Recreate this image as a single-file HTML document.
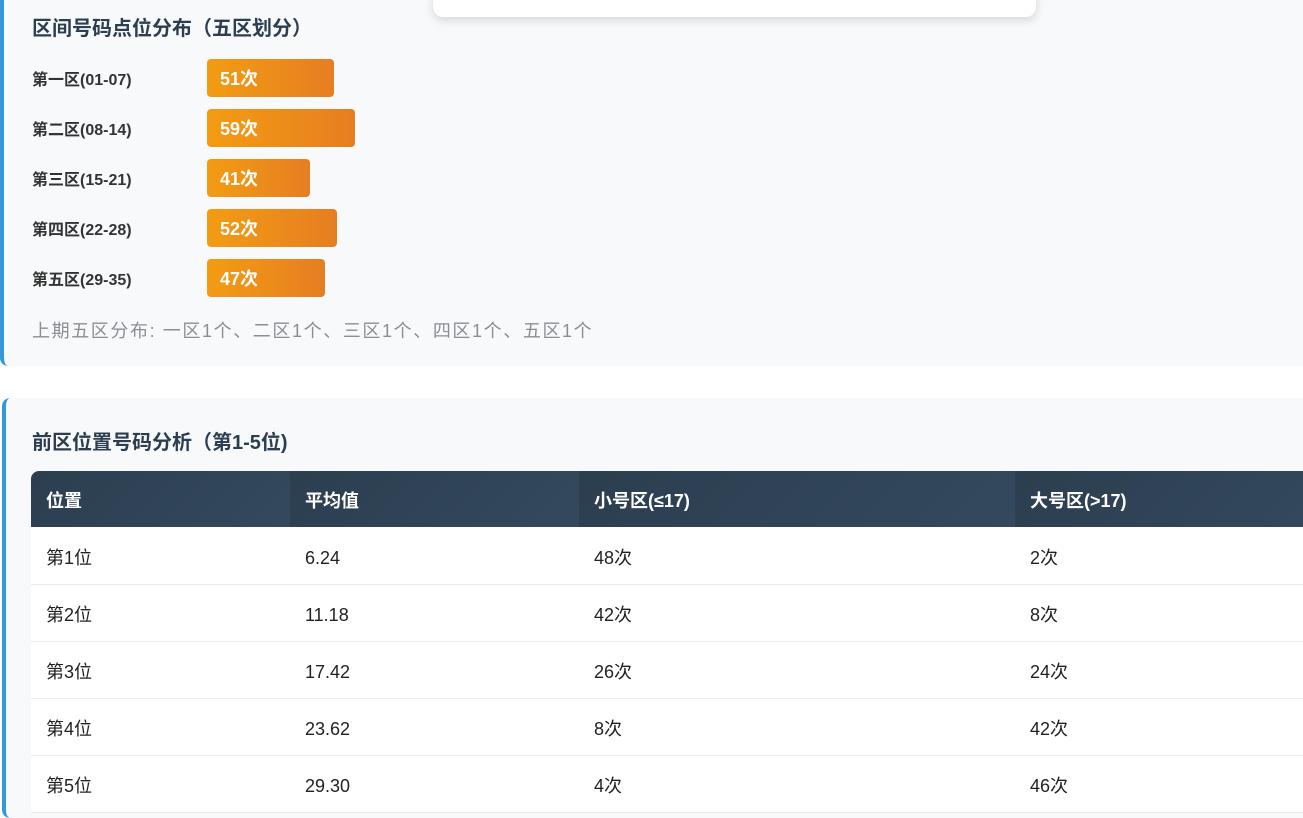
<!DOCTYPE html>
<html><head><meta charset="utf-8"><style>
*{margin:0;padding:0;box-sizing:border-box}
body{width:1303px;height:790px;overflow:hidden;background:#fff;font-family:"Liberation Sans","Noto Sans CJK SC",sans-serif;position:relative}
.sec{position:absolute;left:0;width:1320px;background:#f7f9fb;border-left:4px solid #3498db;border-radius:8px}
h3{position:absolute;left:28px;font-size:20px;font-weight:bold;color:#2c3e50}
.row{position:absolute;left:28px;height:38px;display:flex;align-items:center}
.row .l{width:175px;font-size:16px;color:#333;font-weight:bold}
.bar{height:38px;border-radius:4px;background:linear-gradient(90deg,#f39c12,#e67e22);color:#fff;font-weight:bold;font-size:18px;display:flex;align-items:center;padding-left:13px}
.note{position:absolute;left:28px;font-size:18px;color:#8a8f95;letter-spacing:1.6px}
table{position:absolute;top:73px;width:1300px;border-collapse:collapse;font-size:18px;color:#222}
th{height:56px;text-align:left;padding-left:15px;padding-top:2px;color:#fff;font-size:18px;background:linear-gradient(135deg,#2c3e50,#34495e);vertical-align:middle}
td{height:57px;padding-left:15px;padding-top:5px;border-bottom:1px solid #e8ecef;background:#fff;vertical-align:middle;line-height:24px}
.pop{position:absolute;left:433px;top:-10px;width:603px;height:27px;background:#fff;border-radius:10px;box-shadow:0 3px 10px rgba(0,0,0,.15)}
</style></head><body>
<div class="sec" style="top:-20px;height:386px">
<h3 style="top:32px">区间号码点位分布（五区划分）</h3>
<div class="row" style="top:79px"><span class="l">第一区(01-07)</span><div class="bar" style="width:127px">51次</div></div>
<div class="row" style="top:129px"><span class="l">第二区(08-14)</span><div class="bar" style="width:148px">59次</div></div>
<div class="row" style="top:179px"><span class="l">第三区(15-21)</span><div class="bar" style="width:103px">41次</div></div>
<div class="row" style="top:229px"><span class="l">第四区(22-28)</span><div class="bar" style="width:130px">52次</div></div>
<div class="row" style="top:279px"><span class="l">第五区(29-35)</span><div class="bar" style="width:118px">47次</div></div>
<div class="note" style="top:337px">上期五区分布: 一区1个、二区1个、三区1个、四区1个、五区1个</div>
</div>
<div class="pop"></div>
<div class="sec" style="top:398px;height:420px;left:2px">
<h3 style="top:28px;left:26px">前区位置号码分析（第1-5位)</h3>
<table style="left:25px">
<tr><th style="width:259px;border-radius:8px 0 0 0">位置</th><th style="width:289px">平均值</th><th style="width:436px">小号区(≤17)</th><th>大号区(&gt;17)</th></tr>
<tr><td>第1位</td><td>6.24</td><td>48次</td><td>2次</td></tr>
<tr><td>第2位</td><td>11.18</td><td>42次</td><td>8次</td></tr>
<tr><td>第3位</td><td>17.42</td><td>26次</td><td>24次</td></tr>
<tr><td>第4位</td><td>23.62</td><td>8次</td><td>42次</td></tr>
<tr><td>第5位</td><td>29.30</td><td>4次</td><td>46次</td></tr>
</table>
</div>
</body></html>
